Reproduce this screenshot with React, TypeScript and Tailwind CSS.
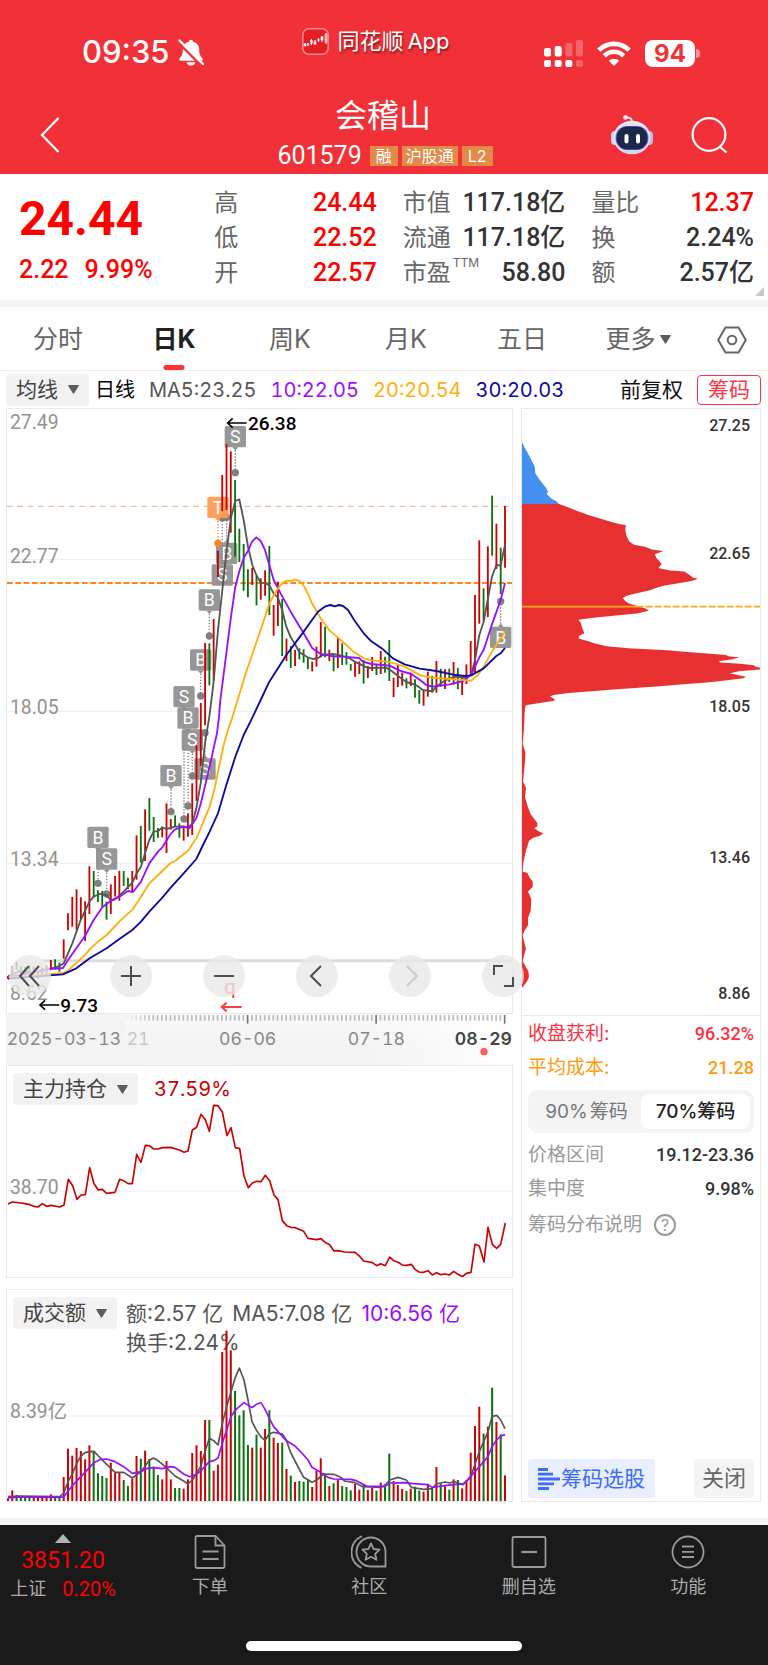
import type { ReactNode } from 'react';

type Candle = [high: number, low: number, up: 0 | 1];
type Point = [x: number, y: number];

// Chart geometry is kept in 1/3 px units, both axes
const BAR_START = 25;
const BAR_STEP = 12.853;
const RED = '#cc0000';
const GREEN = '#0a720a';
const MA5 = '#555555';
const MA10 = '#9b0dff';
const MA20 = '#ffae0d';
const MA30 = '#0a0a9e';

const barX = (i: number) => BAR_START + BAR_STEP * i;

const candles: Candle[] = [
  [1728, 1737, 1], [1698, 1730, 1], [1685, 1710, 0], [1700, 1720, 0], [1700, 1725, 0],
  [1700, 1730, 0], [1700, 1725, 1], [1715, 1736, 1], [1703, 1725, 1], [1695, 1722, 1],
  [1680, 1706, 1], [1678, 1708, 0], [1688, 1715, 0], [1618, 1676, 1], [1540, 1591, 1],
  [1491, 1580, 1], [1468, 1590, 1], [1492, 1560, 1], [1504, 1623, 1], [1399, 1542, 1],
  [1413, 1492, 0], [1471, 1506, 0], [1473, 1520, 0], [1505, 1559, 0], [1453, 1542, 1],
  [1428, 1490, 1], [1413, 1502, 1], [1413, 1458, 0], [1433, 1467, 0], [1413, 1477, 1],
  [1306, 1439, 1], [1278, 1388, 0], [1228, 1383, 1], [1194, 1292, 0], [1251, 1326, 0],
  [1284, 1313, 0], [1280, 1312, 1], [1210, 1359, 1], [1257, 1289, 1], [1246, 1281, 0],
  [1270, 1313, 0], [1280, 1322, 1], [1240, 1310, 1], [1150, 1305, 1], [1036, 1203, 1],
  [909, 1098, 1], [729, 976, 1], [730, 856, 0], [657, 842, 1], [452, 531, 1],
  [225, 333, 1], [132, 330, 1], [154, 398, 1], [240, 470, 0], [386, 486, 0],
  [432, 572, 0], [508, 592, 0], [504, 555, 1], [527, 616, 0], [535, 599, 1],
  [511, 587, 1], [438, 645, 0], [615, 707, 1], [545, 678, 1], [597, 768, 0],
  [716, 783, 1], [738, 804, 0], [750, 798, 1], [745, 778, 0], [748, 788, 0],
  [772, 807, 0], [785, 814, 1], [740, 800, 1], [666, 772, 1], [680, 772, 0],
  [749, 783, 1], [765, 814, 0], [712, 804, 1], [730, 795, 0], [756, 794, 0],
  [792, 812, 0], [784, 830, 1], [784, 822, 1], [780, 851, 0], [798, 834, 1],
  [771, 813, 1], [792, 825, 0], [753, 822, 1], [770, 818, 0], [720, 843, 0],
  [833, 891, 1], [792, 861, 1], [818, 857, 1], [835, 865, 0], [818, 858, 1],
  [838, 893, 0], [870, 911, 0], [870, 917, 1], [815, 890, 1], [828, 878, 0],
  [783, 878, 1], [806, 860, 0], [808, 867, 1], [806, 846, 0], [786, 854, 1],
  [804, 868, 0], [830, 885, 1], [793, 852, 1], [723, 828, 1], [585, 822, 1],
  [421, 671, 1], [565, 662, 0], [439, 651, 1], [287, 467, 0], [371, 507, 1],
  [443, 582, 0], [318, 503, 1],
];

const ma5Line = '25,1728 64,1712 102,1718 154,1706 180,1698 192,1690 218,1630 243,1560 269,1505 282,1490 300,1482 321,1485 334,1502 346,1498 372,1475 398,1448 411,1420 424,1400 436,1360 449,1320 462,1294 475,1294 488,1282 500,1287 526,1280 552,1279 565,1284 578,1270 590,1225 603,1150 616,1030 629,950 642,845 655,690 668,570 681,450 694,352 707,303 719,298 732,360 745,440 758,495 770,525 783,548 796,549 809,556 822,580 835,593 848,632 860,680 873,712 886,732 899,757 924,772 940,777 955,774 970,765 1000,762 1030,768 1050,775 1065,785 1090,797 1105,804 1160,803 1175,812 1200,832 1220,846 1245,853 1270,870 1298,874 1310,860 1335,842 1365,830 1400,834 1415,822 1426,780 1439,705 1452,665 1464,600 1477,530 1490,495 1503,496 1516,435';
const ma10Line = '25,1732 150,1707 190,1704 205,1680 230,1645 256,1608 282,1560 308,1522 334,1502 359,1490 385,1473 400,1476 424,1445 449,1390 475,1355 488,1342 513,1302 526,1288 552,1280 570,1284 590,1255 603,1212 618,1150 632,1090 645,1030 652,1000 658,950 662,900 680,760 694,650 707,560 720,510 733,472 745,453 757,425 770,412 783,423 796,450 809,495 822,540 848,590 873,635 900,680 912,700 925,722 938,745 963,762 1000,769 1030,770 1078,774 1090,785 1115,792 1170,797 1200,812 1235,822 1258,838 1280,855 1298,860 1350,853 1390,843 1415,824 1440,770 1452,750 1478,670 1503,600 1516,549';
const ma20Line = '25,1734 190,1719 205,1712 256,1665 270,1648 295,1625 321,1605 359,1565 398,1529 424,1490 449,1450 488,1413 513,1389 526,1383 565,1352 590,1315 603,1285 630,1220 645,1165 658,1100 672,1035 685,990 697,955 717,890 735,830 757,765 783,690 809,610 835,565 850,548 862,542 872,543 886,539 900,543 912,557 925,582 938,612 963,655 990,692 1015,713 1040,735 1060,754 1078,766 1092,775 1115,781 1160,785 1185,790 1215,800 1245,817 1265,827 1295,833 1350,837 1415,842 1435,825 1452,800 1477,755 1503,715 1516,695';
const ma30Line = '25,1736 190,1723 230,1705 270,1675 321,1645 359,1617 398,1590 424,1565 449,1535 488,1493 513,1463 552,1420 590,1377 610,1335 630,1295 655,1240 680,1155 707,1070 732,1005 757,955 783,900 809,845 835,805 860,765 886,730 912,695 937,660 955,635 975,620 992,615 1005,619 1018,615 1030,618 1045,630 1065,662 1092,700 1115,724 1150,748 1180,775 1215,793 1260,806 1310,813 1360,824 1395,828 1415,826 1452,805 1490,768 1503,760 1516,744';

// label, bar x, top of the box, y of the dot
const markers: [string, number, number, number][] = [
  ['S', 707, 78, 218],
  ['B', 681, 428, 352],
  ['S', 668, 493, 354],
  ['B', 629, 568, 708],
  ['B', 603, 748, 888],
  ['S', 553, 858, 1257],
  ['B', 565, 922, 1218],
  ['S', 578, 988, 1128],
  ['B', 514, 1095, 1235],
  ['S', 616, 1075, 998],
  ['B', 295, 1280, 1450],
  ['S', 321, 1345, 1482],
  ['B', 1503, 680, 604],
  ['T', 655, 290, 430],
];

const holdingLine = '25,434 38,428 64,431 76,433 90,436 102,441 115,443 128,433 141,441 154,438 180,443 193,437 206,360 219,379 232,420 244,407 257,406 270,325 283,373 296,392 308,390 321,402 346,399 360,360 372,364 385,373 398,373 411,285 424,309 437,258 449,259 462,269 475,269 488,265 513,264 539,272 553,279 565,275 578,212 591,204 604,165 617,181 629,216 642,138 655,139 668,158 682,229 694,205 707,265 720,268 733,350 746,385 758,371 771,366 784,367 797,348 810,364 823,407 835,421 848,484 861,499 873,504 887,505 912,516 925,537 951,541 964,538 976,549 990,556 1003,575 1015,574 1035,578 1066,579 1078,589 1092,605 1118,610 1131,619 1143,613 1157,619 1170,593 1182,604 1195,609 1208,617 1220,618 1235,615 1247,631 1258,638 1272,639 1285,634 1298,647 1311,640 1323,646 1336,644 1349,647 1362,636 1375,645 1388,652 1400,642 1414,639 1426,555 1439,560 1453,608 1465,504 1478,555 1491,567 1503,555 1517,491';

const turnoverTops = [
  655, 631, 645, 650, 652, 652, 652, 652, 648, 650, 643, 648, 648, 591, 506, 527, 504, 513, 538, 496,
  513, 580, 588, 594, 548, 577, 576, 600, 618, 596, 528, 536, 512, 537, 560, 585, 598, 543, 598, 624,
  624, 626, 598, 519, 496, 513, 420, 420, 572, 554, 216, 152, 211, 333, 406, 391, 495, 503, 464, 503,
  447, 391, 473, 489, 488, 567, 587, 606, 603, 605, 598, 621, 572, 535, 588, 618, 610, 599, 618, 621,
  631, 612, 629, 613, 630, 624, 632, 608, 613, 521, 603, 615, 627, 633, 626, 620, 632, 635, 612, 627,
  561, 610, 619, 629, 598, 600, 625, 600, 518, 438, 380, 461, 440, 323, 426, 463, 586,
];
const turnoverMa5 = '25,650 60,648 180,650 192,640 205,605 218,582 231,550 244,528 256,518 270,515 283,514 296,528 321,553 346,577 372,577 398,594 424,575 449,541 462,534 475,542 500,563 526,588 552,603 565,612 578,600 603,560 616,515 629,475 642,482 655,495 668,430 681,380 694,335 707,292 719,264 733,300 745,360 757,425 770,450 783,470 796,481 809,462 822,457 848,462 860,480 873,518 900,570 912,592 937,607 951,600 972,582 1002,583 1020,590 1035,603 1066,608 1090,620 1143,622 1157,615 1170,600 1195,592 1220,600 1235,622 1272,628 1297,626 1310,612 1336,606 1350,609 1362,605 1390,614 1413,590 1439,515 1465,455 1477,410 1491,406 1503,420 1516,446';
const turnoverMa10 = '25,654 60,651 180,652 192,650 218,617 256,577 283,548 300,539 321,537 346,545 372,560 398,580 424,575 440,566 460,563 488,566 513,560 526,562 552,582 570,590 590,583 603,573 629,545 642,542 655,534 668,490 681,450 694,410 707,390 719,380 733,368 757,383 770,373 784,368 796,388 809,415 822,440 835,455 860,482 885,497 912,525 925,540 937,562 963,577 985,592 1002,597 1053,598 1070,602 1100,618 1155,620 1170,609 1215,608 1240,611 1285,614 1297,622 1336,617 1362,614 1390,612 1400,605 1413,590 1439,560 1465,530 1477,500 1491,480 1503,468 1516,464';

const chipLoss = '36,106 45,122 60,145 74,168 76,185 90,203 108,222 114,232 110,238 125,250 140,257 147,263 36,263';
const chipProfit = '36,263 147,263 170,270 200,280 235,291 275,301 310,310 330,314 347,316 346,330 350,345 358,358 372,366 405,371 425,378 460,382 455,384 434,390 440,400 448,408 455,415 445,425 480,431 523,434 540,443 548,449 564,452 545,458 510,463 460,470 435,476 420,481 380,489 350,495 338,501 345,508 355,514 380,521 405,527 417,533 380,540 310,546 250,551 205,556 212,563 216,575 223,590 207,597 206,603 235,610 255,616 290,623 355,628 470,633 542,638 600,642 648,645 655,648 687,651 668,656 626,661 632,664 690,667 732,671 735,674 752,678 750,682 686,686 660,691 680,695 708,700 700,704 620,712 580,715 520,719 450,724 385,728 300,733 225,738 175,741 130,746 120,750 134,757 133,761 100,765 70,769 47,772 44,790 42,830 38,870 46,890 46,905 42,940 39,965 48,980 45,1005 54,1030 62,1048 82,1070 82,1078 73,1083 88,1092 100,1096 90,1102 70,1107 57,1115 48,1140 40,1170 38,1193 52,1196 58,1207 68,1218 68,1232 54,1243 64,1262 62,1292 54,1310 54,1328 42,1345 38,1355 48,1388 42,1405 38,1420 55,1445 57,1460 50,1472 36,1487';

const chipScale: Point[] = [[27.25, 93], [22.65, 478], [18.05, 935], [13.46, 1390], [8.86, 1796]];

const num = "font-[family-name:Roboto,'Noto_Sans_CJK_SC',sans-serif]";

function Caret() {
  return (
    <svg viewBox="0 0 10 8" className="w-[11px] h-[9px] shrink-0" fill="#5c5c5c">
      <path d="M0.6 0h8.8q.8 0 .3.8L5.6 7.5q-.6.8-1.2 0L.3.8Q-.2 0 .6 0z" />
    </svg>
  );
}

function IndicatorButton({ children }: { children: ReactNode }) {
  return (
    <button className="flex h-8 items-center gap-[10px] rounded bg-[#f2f2f2] px-[10px] text-[21px] leading-8 text-[#444]">
      {children}
      <Caret />
    </button>
  );
}

function Header() {
  return (
    <header className="bg-[#f23038] px-10 pt-[27px] pb-2 text-white">
      <div className="grid h-10 grid-cols-3">
        <div className="flex items-center gap-2 self-end pl-[42px] text-[31px] leading-[30px] font-medium">
          09:35
          <svg viewBox="0 0 26 27" className="h-[27px] w-[26px]" fill="currentColor">
            <path d="M13 .8c-1.200 0-2 .8-2.100 1.900C6.900 3.700 4.800 6.700 4.800 10.500c0 5-1.300 6.700-3 8.600-.9 1-.5 2.700.9 2.700h20.600c1.400 0 1.800-1.700.9-2.700-1.700-1.900-3-3.600-3-8.600 0-3.800-2.100-6.800-6.100-7.800C15 1.600 14.200.8 13 .8z" />
            <path d="M8.500 23.200h9c-.4 1.900-2.300 3.400-4.500 3.400s-4.100-1.500-4.500-3.400z" />
            <path d="M0 3 23 26.500" stroke="#f23038" strokeWidth="2.500" />
            <path d="M1.500 1.500 25 25" stroke="currentColor" strokeWidth="2.400" strokeLinecap="round" />
          </svg>
        </div>
        <div className="flex h-7 items-center justify-center gap-1 self-start pr-4 text-[22px] leading-7 [text-shadow:1px_2px_2px_rgba(0,0,0,0.45)]">
          <svg viewBox="0 0 27 27" className="mr-1 h-[27px] w-[27px]">
            <rect x=".8" y=".8" width="25.400" height="25.400" rx="6" fill="#e31f24" stroke="#f98a8d" strokeWidth="1.500" />
            <g stroke="#fff" strokeWidth="1">
              <path d="M3 15v3M6 15v3M9.500 11v6M13 12v5M16.500 10v4M20 8v6M24 5v11" />
            </g>
            <g fill="#fff" stroke="#fff" strokeWidth=".6">
              <rect x="2" y="16" width="2" height="2" />
              <circle cx="6" cy="16.500" r="1" fill="none" />
              <rect x="8.500" y="12.500" width="2" height="3" fill="none" />
              <rect x="12" y="14" width="2" height="2" />
              <circle cx="16.500" cy="12" r="1" fill="none" />
              <rect x="19" y="9" width="2" height="3" />
              <rect x="23" y="6" width="2" height="8" fill="none" />
            </g>
          </svg>
          <span>同花顺</span>
          <span>App</span>
        </div>
        <div className="flex items-center justify-end gap-[14px] self-end pr-7">
          <svg viewBox="0 0 39 27" className="h-[27px] w-[39px]" fill="#fff">
            <rect x="0" y="8" width="7" height="8.500" rx="2" />
            <rect x="10.700" y="6" width="7" height="10.500" rx="2" />
            <rect x="21.400" y="3" width="7" height="13.500" rx="2" opacity=".25" />
            <rect x="32" y="0" width="7" height="16.500" rx="2" opacity=".25" />
            <rect x="0" y="20" width="7" height="7" rx="2" />
            <rect x="10.700" y="20" width="7" height="7" rx="2" />
            <rect x="21.400" y="20" width="7" height="7" rx="2" />
            <rect x="32" y="20" width="7" height="7" rx="2" opacity=".25" />
          </svg>
          <svg viewBox="0 0 34 25" className="h-[25px] w-[34px]" fill="none" stroke="#fff" strokeWidth="4.600">
            <path d="M1.800 9.200a21.500 21.500 0 0 1 30.400 0" />
            <path d="M7.300 14.800a13.700 13.700 0 0 1 19.400 0" />
            <path d="M17 25l-5.200-5.200a7.400 7.400 0 0 1 10.400 0z" fill="#fff" stroke="none" />
          </svg>
          <div className="flex items-center gap-px">
            <span className="flex h-[27px] w-[50px] items-center justify-center rounded-lg bg-white text-[24px] leading-[27px] font-bold text-[#f23038]">
              94
            </span>
            <span className="h-[9px] w-1 rounded-r-full bg-white/50" />
          </div>
        </div>
      </div>

      <div className="mt-[29px] flex items-center justify-between">
        <button aria-label="返回" className="flex w-[116px] pt-2">
          <svg viewBox="0 0 20 36" className="h-9 w-5" fill="none" stroke="#fff" strokeWidth="2.200">
            <path d="M18.500 1 2 18l16.500 17" />
          </svg>
        </button>
        <div className="flex flex-col items-center">
          <h1 className="text-[32px] leading-10">会稽山</h1>
          <div className="mt-[10px] flex items-center gap-1 pl-1 text-base leading-5">
            <span className={`${num} mr-1 text-[25px]`}>601579</span>
            <span className="bg-[#e28a47] px-[6px]">融</span>
            <span className="bg-[#e28a47] px-1">沪股通</span>
            <span className="bg-[#e28a47] px-[6px]">L2</span>
          </div>
        </div>
        <div className="flex items-center gap-[37px] pt-2">
          <button aria-label="智能助手">
            <svg viewBox="0 0 44 40" className="h-10 w-11">
              <path d="M22 8c.5-4-1.500-5.500-5-5.500" fill="none" stroke="#e6e4f5" strokeWidth="1.800" />
              <circle cx="15.500" cy="2.500" r="2.300" fill="#f4f2fc" />
              <rect x="1" y="16" width="8" height="14" rx="4" fill="#d3d1f2" />
              <rect x="35" y="16" width="8" height="14" rx="4" fill="#bdb9e8" />
              <ellipse cx="22" cy="22.500" rx="18.500" ry="16.800" fill="#e6e6f9" />
              <ellipse cx="22" cy="34" rx="11" ry="5" fill="#d0d6f4" />
              <rect x="5.500" y="11" width="33" height="24" rx="11.500" fill="#8d63e6" />
              <rect x="6.500" y="11.500" width="31" height="23" rx="11" fill="#1b2749" />
              <rect x="14.500" y="19" width="4" height="9.500" rx="2" fill="#fff" />
              <rect x="26" y="19" width="4" height="9.500" rx="2" fill="#fff" />
            </svg>
          </button>
          <button aria-label="搜索">
            <svg viewBox="0 0 37 36" className="h-9 w-[37px]" fill="none" stroke="#fff" strokeWidth="2.200">
              <circle cx="18" cy="17.500" r="16.400" />
              <path d="M28.500 29.500 35.500 35.500" />
            </svg>
          </button>
        </div>
      </div>
    </header>
  );
}

function Stat({ label, value, sup, up }: { label: string; value: string; sup?: string; up?: boolean }) {
  return (
    <div className="flex h-[35px] items-center justify-between">
      <dt className="flex text-[24px] leading-[35px] text-[#666]">
        {label}
        {sup && <sup className="top-0 pl-[2px] text-[12px] leading-4">{sup}</sup>}
      </dt>
      <dd className={`${num} text-[25px] leading-[35px] font-medium ${up ? 'text-[#ff0000]' : 'text-[#333]'}`}>
        {value}
      </dd>
    </div>
  );
}

function Quote() {
  return (
    <section className="relative grid h-[126px] grid-cols-[1.04fr_1fr_1fr_1fr] gap-x-[26px] pt-[11px] pr-[14px] pl-[19px]">
      <div className={`${num} text-[#ff0000]`}>
        <p className="pt-[2px] text-[48px] leading-[63px] font-bold">24.44</p>
        <p className="flex gap-4 text-[25px] leading-10 font-medium">
          <span>2.22</span>
          <span>9.99%</span>
        </p>
      </div>
      <dl>
        <Stat label="高" value="24.44" up />
        <Stat label="低" value="22.52" up />
        <Stat label="开" value="22.57" up />
      </dl>
      <dl>
        <Stat label="市值" value="117.18亿" />
        <Stat label="流通" value="117.18亿" />
        <Stat label="市盈" value="58.80" sup="TTM" />
      </dl>
      <dl>
        <Stat label="量比" value="12.37" up />
        <Stat label="换" value="2.24%" />
        <Stat label="额" value="2.57亿" />
      </dl>
      <svg viewBox="0 0 9 9" className="absolute right-1 bottom-1 h-[9px] w-[9px]" fill="#c8c8c8">
        <path d="M9 0v9H0z" />
      </svg>
    </section>
  );
}

const periods = ['分时', '日K', '周K', '月K', '五日'];

function PeriodTabs() {
  return (
    <nav className="flex h-16 border-b border-[#eee] pt-[2px] text-[25px] text-[#666]">
      {periods.map((p) => (
        <button
          key={p}
          className={`relative flex-1 ${p === '日K' ? 'font-bold text-[#222]' : ''}`}
        >
          {p}
          {p === '日K' && (
            <span className="absolute bottom-0 left-1/2 h-[5px] w-[21px] -translate-x-1/2 rounded-sm bg-[#ff3333]" />
          )}
        </button>
      ))}
      <button className="flex flex-1 items-center justify-center gap-1">
        更多
        <Caret />
      </button>
      <button aria-label="设置" className="flex w-[72px] items-center justify-center">
        <svg viewBox="0 0 30 28" className="h-7 w-[30px]" fill="none" stroke="#666" strokeWidth="2">
          <path d="M8.500 1.500h13L28.800 14l-7.300 12.500h-13L1.200 14z" strokeLinejoin="round" />
          <circle cx="15" cy="14" r="4.300" />
        </svg>
      </button>
    </nav>
  );
}

function MaBar() {
  return (
    <div className="flex h-[37px] items-center justify-between pr-[7px] pl-[6px] text-[20px] leading-8 whitespace-nowrap">
      <div className="flex items-center">
        <IndicatorButton>均线</IndicatorButton>
        <span className="ml-[6px] text-black">日线</span>
        <span className="ml-[14px] flex gap-[14px] tabular-nums">
          <span className="text-[#555]">MA5:23.25</span>
          <span className="text-[#9b0dff]">10:22.05</span>
          <span className="text-[#ffae0d]">20:20.54</span>
          <span className="text-[#0a0a9e]">30:20.03</span>
        </span>
      </div>
      <div className="flex items-center gap-[14px] text-[21px]">
        <span className="text-[#111]">前复权</span>
        <button className="h-[30px] rounded border border-[#ff3344] px-[10px] leading-7 text-[#ff3344]">筹码</button>
      </div>
    </div>
  );
}

function Marker({ label, x, top, dot }: { label: string; x: number; top: number; dot: number }) {
  const fill = label === 'T' ? '#ff9a50' : '#8e8e8e';
  const below = dot < top;
  const tip = below ? top : top + 64;
  return (
    <g>
      <path
        d={`M${x} ${tip}V${dot}`}
        stroke={label === 'T' ? '#ff8426' : '#808080'}
        strokeWidth="4"
        strokeDasharray="4 5"
      />
      <circle cx={x} cy={dot} r="11" fill={label === 'T' ? '#ff8426' : '#808080'} />
      <path d={below ? `M${x - 9} ${tip}l9-9 9 9z` : `M${x - 9} ${tip}l9 9 9-9z`} fill={fill} />
      <rect x={x - 32} y={top} width="64" height="64" rx="5" fill={fill} opacity=".92" />
      <text x={x} y={top + 51} textAnchor="middle" fontSize="53" fill="#fff">
        {label}
      </text>
    </g>
  );
}

const toolButton = 'flex size-[42px] items-center justify-center rounded-full bg-[#e8e8e8]/80';

function ToolIcon({ d, color = '#4d4d4d' }: { d: string; color?: string }) {
  return (
    <svg viewBox="0 0 42 42" className="size-[42px]" fill="none" stroke={color} strokeWidth="2">
      <path d={d} />
    </svg>
  );
}

function PriceChart() {
  return (
    <div className="relative border border-[#e9e9e9]">
      <svg viewBox="22 27 1515 1812" className={`block w-full overflow-visible ${num}`}>
        <path d="M22 479H1537M22 934H1537M22 1390H1537" stroke="#ededed" strokeWidth="3" />
        <path d="M22 319H1537" stroke="#e6c49a" strokeWidth="4" strokeDasharray="17 14" />
        <path d="M22 549H1537" stroke="#ff8426" strokeWidth="6" strokeDasharray="17 8" />
        <path d="M130 1682H1537" stroke="#dcdcdc" strokeWidth="9" />
        <g fontSize="58" fill="#929292">
          <text x="31" y="88">27.49</text>
          <text x="31" y="489">22.77</text>
          <text x="31" y="943">18.05</text>
          <text x="31" y="1397">13.34</text>
          <text x="31" y="1800">8.62</text>
        </g>
        {markers.map(([label, x, top, dot]) => (
          <Marker key={x} label={label} x={x} top={top} dot={dot} />
        ))}
        {candles.map(([high, low, up], i) => (
          <path key={i} d={`M${barX(i)} ${high}V${low}`} stroke={up ? RED : GREEN} strokeWidth="5.500" />
        ))}
        <g fill="none" strokeWidth="5.500" strokeLinejoin="round">
          <polyline points={ma5Line} stroke={MA5} />
          <polyline points={ma10Line} stroke={MA10} />
          <polyline points={ma20Line} stroke={MA20} />
          <polyline points={ma30Line} stroke={MA30} />
        </g>
        <g fontSize="57" fontWeight="500" fill="#000">
          <text x="745" y="91">26.38</text>
          <text x="182" y="1835">9.73</text>
        </g>
        <g fill="none" stroke="#000" strokeWidth="5">
          <path d="M741 69H684M699 55l-15 14 15 14" />
          <path d="M179 1815H121M136 1801l-15 14 15 14" />
        </g>
        <text x="673" y="1783" fontSize="62" fill="#f04040">q</text>
        <path d="M726 1821H666M681 1808l-15 13 15 13" fill="none" stroke="#f04040" strokeWidth="6" />
      </svg>
      <div className="absolute right-[-12px] bottom-4 left-[2px] z-10 flex justify-between">
        <button aria-label="最早" className={toolButton}>
          <ToolIcon d="M20 11 11 21l9 10M30 11 21 21l9 10" />
        </button>
        <div className="flex gap-[51px]">
          <button aria-label="放大" className={toolButton}>
            <ToolIcon d="M21 11v20M11 21h20" />
          </button>
          <button aria-label="缩小" className={toolButton}>
            <ToolIcon d="M11 21h20" />
          </button>
          <button aria-label="向左" className={toolButton}>
            <ToolIcon d="M25 11 15 21l10 10" />
          </button>
          <button aria-label="向右" className={toolButton}>
            <ToolIcon d="M18 11 28 21 18 31" color="#cccccc" />
          </button>
          <button aria-label="全屏" className={toolButton}>
            <ToolIcon d="M12 20v-9h9M31 22v9h-9" />
          </button>
        </div>
      </div>
    </div>
  );
}

function TimeAxis() {
  const ticks = Array.from({ length: 89 }, (_, i) => i + 28);
  return (
    <svg
      viewBox="20 0 1521 153"
      className="block w-full bg-linear-to-r from-[#f3f3f3] from-70% to-white tabular-nums"
    >
      <defs>
        <linearGradient id="axisShade" x1="0" x2="0" y1="0" y2="1">
          <stop offset="0" stopColor="#fff" />
          <stop offset="1" stopColor="#fff" stopOpacity="0" />
        </linearGradient>
      </defs>
      <rect x="380" y="0" width="1161" height="100" fill="url(#axisShade)" opacity=".6" />
      {ticks.map((i) => (
        <path
          key={i}
          d={`M${barX(i)} 3V${i === 56 || i === 86 || i === 116 ? 29 : 20}`}
          stroke={i === 56 || i === 86 || i === 116 ? '#777' : '#bbb'}
          strokeWidth="5"
          opacity={i < 34 ? (i - 27) / 7 : 1}
        />
      ))}
      <g fontSize="53" fill="#888">
        <text x="22" y="94">2025-03-13</text>
        <text x="382" y="94" fill="#c8c8c8">21</text>
        <text x="745" y="94" textAnchor="middle">06-06</text>
        <text x="1131" y="94" textAnchor="middle">07-18</text>
        <text x="1538" y="94" textAnchor="end" fill="#444" fontWeight="600">08-29</text>
      </g>
      <circle cx="1454" cy="113" r="11" fill="#ff5a5f" />
    </svg>
  );
}

function HoldingChart() {
  return (
    <div className="relative border border-[#e9e9e9]">
      <svg viewBox="22 20 1515 633" className={`block w-full ${num}`}>
        <path d="M22 395H1537" stroke="#ededed" strokeWidth="3" />
        <text x="31" y="403" fontSize="58" fill="#929292">38.70</text>
        <polyline points={holdingLine} fill="none" stroke={RED} strokeWidth="5" strokeLinejoin="round" />
      </svg>
      <div className="absolute top-[7px] left-[6px] flex items-center gap-4">
        <IndicatorButton>主力持仓</IndicatorButton>
        <span className="text-[20px] leading-8 text-[#cc0000] tabular-nums">37.59%</span>
      </div>
    </div>
  );
}

function TurnoverChart() {
  return (
    <div className="relative mt-[11px] border border-[#e9e9e9]">
      <div className="absolute top-[7px] left-[6px] flex gap-[9px] whitespace-nowrap">
        <IndicatorButton>成交额</IndicatorButton>
        <div className="text-[21px] leading-[29px] text-[#555]">
          <p className="flex gap-[9px] pt-[2px]">
            <span>额:2.57 亿</span>
            <span>MA5:7.08 亿</span>
            <span className="text-[#9b0dff]">10:6.56 亿</span>
          </p>
          <p>换手:2.24%</p>
        </div>
      </div>
      <svg viewBox="22 30 1515 633" className={`relative block w-full ${num}`}>
        <path d="M22 408H1537" stroke="#ededed" strokeWidth="3" />
        <text x="31" y="415" fontSize="58" fill="#929292">8.39亿</text>
        {turnoverTops.map((top, i) => (
          <path key={i} d={`M${barX(i)} ${top}V664`} stroke={candles[i][2] ? RED : GREEN} strokeWidth="6" />
        ))}
        <g fill="none" strokeWidth="5" strokeLinejoin="round">
          <polyline points={turnoverMa5} stroke={MA5} />
          <polyline points={turnoverMa10} stroke={MA10} />
        </g>
      </svg>
    </div>
  );
}

function ChipPanel() {
  return (
    <aside className="flex flex-col border border-[#e9e9e9]">
      <svg viewBox="36 27 714 1818" className={`block w-full border-b border-[#e9e9e9] ${num}`}>
        <g transform="scale(1 1.186)">
          <polygon points={chipLoss} fill="#4490ee" />
          <polygon points={chipProfit} fill="#e83030" />
        </g>
        <path d="M36 620H400" stroke="#ffa51f" strokeWidth="5" />
        <path d="M407 620H750" stroke="#ffa51f" strokeWidth="5" strokeDasharray="21 6" />
        <g fontSize="48" fontWeight="500" fill="#333" textAnchor="end">
          {chipScale.map(([price, y]) => (
            <text key={y} x="720" y={y}>{price}</text>
          ))}
        </g>
      </svg>
      <div className="px-[6px] pt-px text-[19px] leading-[34px] text-[#999]">
        <p className="flex justify-between text-[#ff2f45]">
          收盘获利:<span className={`${num} text-[18px] font-medium`}>96.32%</span>
        </p>
        <p className="flex justify-between text-[#ff9a0d]">
          平均成本:<span className={`${num} text-[18px] font-medium`}>21.28</span>
        </p>
        <div className="my-[5px] flex h-[43px] rounded-[10px] bg-[#f4f4f4] p-1">
          <button className="flex flex-1 items-center justify-center gap-[2px] text-[#777]">
            <span>90%</span>
            <span>筹码</span>
          </button>
          <button className="flex-1 rounded-lg bg-white font-medium text-[#222]">70%筹码</button>
        </div>
        <p className="flex justify-between">
          价格区间<span className={`${num} text-[18px] font-medium text-[#333]`}>19.12-23.36</span>
        </p>
        <p className="flex justify-between">
          集中度<span className={`${num} text-[18px] font-medium text-[#333]`}>9.98%</span>
        </p>
        <button className="flex items-center gap-3 leading-[37px]">
          筹码分布说明
          <span className="flex size-[22px] items-center justify-center rounded-full border-2 border-[#999] text-[16px] leading-none">
            ?
          </span>
        </button>
      </div>
      <div className="mt-auto flex justify-between px-[6px] pb-[3px] leading-[39px]">
        <button className="flex items-center gap-px rounded bg-[#e9efff] px-[10px] text-[21px] text-[#3b6cff]">
          <svg viewBox="0 0 22 22" className="size-[22px]" stroke="#3b6cff" strokeWidth="2.800">
            <path d="M0 1.500h10M0 6.200h15M0 11h22M0 15.800h16M0 20.500h11" />
          </svg>
          筹码选股
        </button>
        <button className="rounded bg-[#f4f4f4] px-2 text-[22px] text-[#666]">关闭</button>
      </div>
    </aside>
  );
}

function NavItem({ label, children }: { label: string; children: ReactNode }) {
  return (
    <a href="#" className="flex flex-1 flex-col items-center gap-[5px] pt-[10px] text-[18px] leading-[26px]">
      <svg viewBox="0 0 36 34" className="h-[34px] w-9" fill="none" stroke="#999" strokeWidth="1.800">
        {children}
      </svg>
      {label}
    </a>
  );
}

function BottomNav() {
  return (
    <footer className="bg-[#1a1a1a] text-[#aaa]">
      <div className="flex h-[116px]">
        <a href="#" className={`flex w-[130px] flex-col items-center pt-[9px] pr-1 text-[#ff0000] ${num}`}>
          <svg viewBox="0 0 16 9" className="h-[9px] w-4" fill="#b3b3b3">
            <path d="M8 0l8 9H0z" />
          </svg>
          <span className="text-[23px] leading-[35px]">3851.20</span>
          <span className="flex gap-4 text-[20px] leading-[22px]">
            <span className="text-[18px] text-[#aaa]">上证</span>
            0.20%
          </span>
        </a>
        <NavItem label="下单">
          <path d="M3.500 2.500q0-1.500 1.500-1.500h18.500l9 9.500V31.500q0 1.500-1.500 1.500H5q-1.500 0-1.500-1.500z" />
          <path d="M23.500 1v9.500h9M10.500 16.500h16M10.500 24h16" />
        </NavItem>
        <NavItem label="社区">
          <path d="M11 1C-3 8-3 26 10.500 33" />
          <path d="M34.500 31.500H20A14.500 14.500 0 1 1 34.500 17z" />
          <path d="M20 8.500l2.600 5.500 6 .7-4.400 4.100 1.200 6-5.400-3-5.400 3 1.200-6-4.400-4.100 6-.7z" strokeLinejoin="round" />
        </NavItem>
        <NavItem label="删自选">
          <rect x="1.500" y="2" width="33" height="30" rx="1.500" />
          <path d="M10.500 17h15.500" strokeWidth="2.200" />
        </NavItem>
        <NavItem label="功能">
          <circle cx="18" cy="17" r="15.500" />
          <path d="M12 11.500h12M12 16.800h12M12 22h12" />
        </NavItem>
      </div>
      <div className="flex h-6 justify-center">
        <span className="h-[10px] w-[36%] rounded-full bg-white" />
      </div>
    </footer>
  );
}

export default function App() {
  return (
    <div lang="zh-CN" className="min-h-screen bg-white font-[family-name:Inter,'Noto_Sans_CJK_SC',sans-serif]">
      <Header />
      <Quote />
      <div className="h-[7px] bg-[#f4f4f4]" />
      <PeriodTabs />
      <MaBar />
      <main className="grid grid-cols-[507fr_240fr] gap-2 pr-[7px] pb-4 pl-[6px]">
        <div className="min-w-0">
          <PriceChart />
          <TimeAxis />
          <HoldingChart />
          <TurnoverChart />
        </div>
        <ChipPanel />
      </main>
      <div className="h-[7px] bg-[#f4f4f4]" />
      <BottomNav />
    </div>
  );
}
